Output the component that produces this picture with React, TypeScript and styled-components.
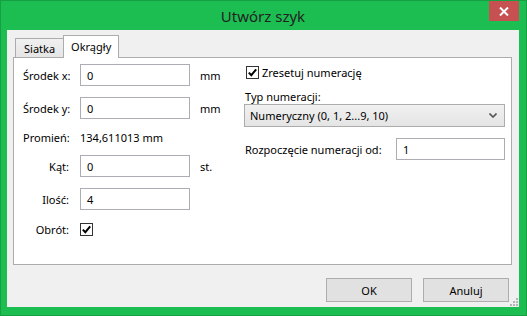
import React from 'react'
import styled, { createGlobalStyle } from 'styled-components'

const GlobalStyle = createGlobalStyle`
  html, body {
    margin: 0;
    padding: 0;
    background: #ffffff;
  }
  body {
    font-family: "Noto Sans", "Open Sans", sans-serif;
    font-size: 11px;
    color: #000;
  }
`

const Window = styled.div`
  width: 527px;
  height: 316px;
  box-sizing: border-box;
  background: #1cbe52;
  border: 1px solid #14a043;
  padding: 0 7px 8px 6px;
  display: flex;
  flex-direction: column;
`

const TitleBar = styled.div`
  height: 29px;
  display: grid;
  grid-template-columns: 1fr auto 1fr;
`

const Title = styled.div`
  grid-column: 2;
  align-self: center;
  font-size: 15px;
  color: #222;
  padding-top: 1px;
`

const CloseButton = styled.div`
  grid-column: 3;
  justify-self: end;
  width: 30px;
  height: 20px;
  background: #c75050;
  display: flex;
  align-items: center;
  justify-content: center;
`

const Client = styled.div`
  position: relative;
  flex: 1;
  background: #f0f0f0;
  padding: 6px 7px 5px 6px;
  display: flex;
  flex-direction: column;
`

const TabStrip = styled.div`
  height: 22px;
  display: flex;
  align-items: flex-end;
  padding-left: 2px;
  position: relative;
  z-index: 1;
  margin-bottom: -1px;
`

const Tab = styled.div<{ $active?: boolean }>`
  box-sizing: border-box;
  height: ${p => (p.$active ? '23px' : '20px')};
  padding: ${p => (p.$active ? '3px 7px 0 7px' : '2px 8px 0 8px')};
  border: 1px solid #acacac;
  border-bottom: ${p => (p.$active ? 'none' : '1px solid #acacac')};
  border-right: ${p => (p.$active ? '1px solid #acacac' : 'none')};
  background: ${p => (p.$active ? '#fff' : 'linear-gradient(#f0f0f0, #e5e5e5)')};
  font-size: 11px;
`

const Panel = styled.div`
  height: 208px;
  box-sizing: border-box;
  background: #fff;
  border: 1px solid #acacac;
  padding: 6px 6px 0 9px;
  display: flex;
`

const LeftForm = styled.div`
  display: grid;
  grid-template-columns: 46px 110px auto;
  grid-template-rows: 22px 22px 14px 22px 22px 16px;
  row-gap: 11px;
  column-gap: 11px;
  align-items: center;
  align-content: start;
`

const Label = styled.div`
  text-align: right;
  white-space: nowrap;
`

const Value = styled.div`
  grid-column: 2 / span 2;
  white-space: nowrap;
`

const Unit = styled.div`
  margin-left: -1px;
`

const TextBox = styled.div<{ $width?: number }>`
  box-sizing: border-box;
  width: ${p => (p.$width ? `${p.$width}px` : '100%')};
  height: 22px;
  border: 1px solid #abadb3;
  background: #fff;
  padding: 0 6px;
  display: flex;
  align-items: center;
`

const CheckBox = styled.div`
  box-sizing: border-box;
  width: 13px;
  height: 13px;
  border: 1px solid #333;
  background: #fff;
  display: flex;
  align-items: center;
  justify-content: center;
`

const RightForm = styled.div`
  margin-left: auto;
  width: 261px;
  padding-top: 1px;
  display: flex;
  flex-direction: column;
`

const CheckRow = styled.div`
  height: 14px;
  display: flex;
  align-items: center;
  gap: 3px;
  padding-left: 2px;
`

const Caption = styled.div`
  margin-top: 11px;
  line-height: 14px;
  padding-left: 1px;
`

const Select = styled.div`
  box-sizing: border-box;
  height: 23px;
  border: 1px solid #acacac;
  background: linear-gradient(#f0f0f0, #e5e5e5);
  padding: 0 7px 0 5px;
  display: flex;
  align-items: center;
  justify-content: space-between;
`

const StartRow = styled.div`
  margin-top: 11px;
  display: flex;
  align-items: center;
  justify-content: space-between;
  padding-left: 1px;
`

const ButtonRow = styled.div`
  margin-top: auto;
  display: flex;
  justify-content: flex-end;
  gap: 11px;
  padding-right: 3px;
`

const Button = styled.div`
  box-sizing: border-box;
  width: 86px;
  height: 24px;
  border: 1px solid #adadad;
  background: #e1e1e1;
  display: flex;
  align-items: center;
  justify-content: center;
`

const Grip = styled.svg`
  position: absolute;
  right: 1px;
  bottom: 1px;
`

const Check = () => (
  <svg width="9" height="9" viewBox="0 0 9 9">
    <path d="M0.8 4.6 L3.3 7.2 L8.2 1.3" fill="none" stroke="#000" strokeWidth="2" />
  </svg>
)

export default function App() {
  return (
    <>
      <GlobalStyle />
      <Window>
        <TitleBar>
          <Title>Utwórz szyk</Title>
          <CloseButton>
            <svg width="10" height="9" viewBox="0 0 10 9">
              <path d="M1 0.5 L9 8.5 M9 0.5 L1 8.5" stroke="#fff" strokeWidth="2" />
            </svg>
          </CloseButton>
        </TitleBar>
        <Client>
          <TabStrip>
            <Tab>Siatka</Tab>
            <Tab $active>Okrągły</Tab>
          </TabStrip>
          <Panel>
            <LeftForm>
              <Label>Środek x:</Label>
              <TextBox>0</TextBox>
              <Unit>mm</Unit>

              <Label>Środek y:</Label>
              <TextBox>0</TextBox>
              <Unit>mm</Unit>

              <Label>Promień:</Label>
              <Value>134,611013 mm</Value>

              <Label>Kąt:</Label>
              <TextBox>0</TextBox>
              <Unit>st.</Unit>

              <Label>Ilość:</Label>
              <TextBox>4</TextBox>
              <span />

              <Label>Obrót:</Label>
              <CheckBox>
                <Check />
              </CheckBox>
            </LeftForm>
            <RightForm>
              <CheckRow>
                <CheckBox>
                  <Check />
                </CheckBox>
                Zresetuj numerację
              </CheckRow>
              <Caption>Typ numeracji:</Caption>
              <Select>
                <span>Numeryczny (0, 1, 2...9, 10)</span>
                <svg width="8" height="5" viewBox="0 0 8 5">
                  <path d="M0.5 0.5 L4 4 L7.5 0.5" fill="none" stroke="#555" strokeWidth="1.6" />
                </svg>
              </Select>
              <StartRow>
                <span>Rozpoczęcie numeracji od:</span>
                <TextBox $width={109}>1</TextBox>
              </StartRow>
            </RightForm>
          </Panel>
          <ButtonRow>
            <Button>OK</Button>
            <Button>Anuluj</Button>
          </ButtonRow>
          <Grip width="8" height="8" viewBox="0 0 8 8">
            <g fill="#b5b5b5">
              <rect x="6" y="0" width="2" height="2" />
              <rect x="3" y="3" width="2" height="2" />
              <rect x="6" y="3" width="2" height="2" />
              <rect x="0" y="6" width="2" height="2" />
              <rect x="3" y="6" width="2" height="2" />
              <rect x="6" y="6" width="2" height="2" />
            </g>
          </Grip>
        </Client>
      </Window>
    </>
  )
}
